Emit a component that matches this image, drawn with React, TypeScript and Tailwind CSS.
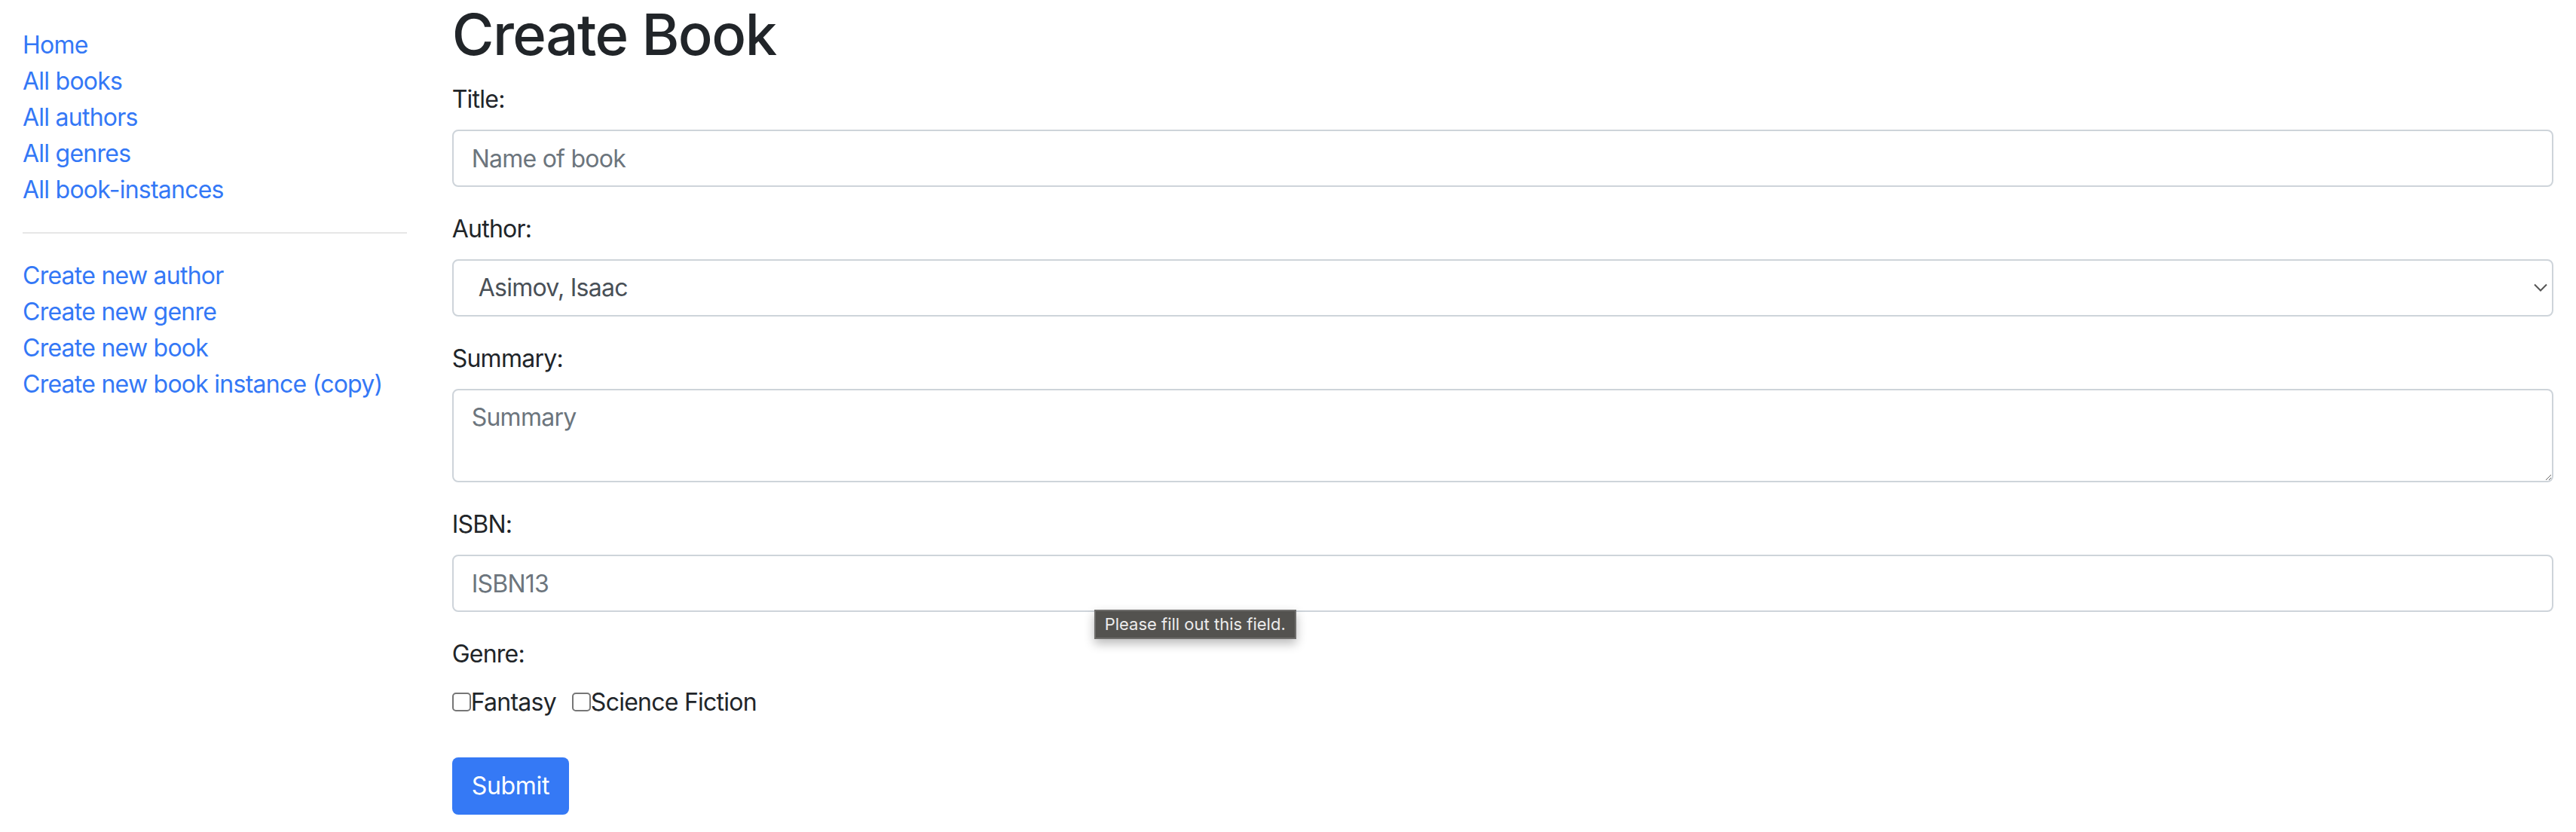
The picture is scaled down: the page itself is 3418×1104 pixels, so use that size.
import type { ReactNode } from 'react'

const FONT = "font-['Inter','Liberation_Sans',sans-serif]"

const NAV_TOP = ['Home', 'All books', 'All authors', 'All genres', 'All book-instances']
const NAV_CREATE = [
  'Create new author',
  'Create new genre',
  'Create new book',
  'Create new book instance (copy)',
]

function NavList({ items }: { items: string[] }) {
  return (
    <ul className="m-0 list-none p-0">
      {items.map((label) => (
        <li key={label} className="leading-[48px]">
          <a href="#" className="text-[#3478f6] no-underline">
            {label}
          </a>
        </li>
      ))}
    </ul>
  )
}

function Field({ label, children }: { label: string; children: ReactNode }) {
  return (
    <div className="relative mb-[32px]">
      <label className="mb-[16px] block leading-[48px] text-[#212529]">{label}</label>
      {children}
    </div>
  )
}

const controlCls =
  'block w-full rounded-[8px] border-2 border-[#ced4da] bg-white px-[24px] text-[32px] tracking-[-0.75px] text-[#495057] outline-none placeholder:text-[#6c757d]'

function Checkbox({ label }: { label: string }) {
  return (
    <span className="mr-[21px] inline-flex items-center">
      <span className="-mt-[2px] inline-block h-[25px] w-[25px] rounded-[5px] border-2 border-[#767676] bg-white" />
      <span className="text-[#212529]">{label}</span>
    </span>
  )
}

export default function App() {
  return (
    <div
      className={`${FONT} grid min-h-[1104px] grid-cols-[1fr_5fr] bg-white text-[32px] tracking-[-0.75px]`}
    >
      <aside className="px-[30px] pt-[36px]">
        <NavList items={NAV_TOP} />
        <hr className="my-[32px] border-0 border-t-2 border-[#e6e6e6]" />
        <NavList items={NAV_CREATE} />
      </aside>

      <main className="px-[30px]">
        <h1 className="mb-[18px] text-[76px] font-medium leading-[90px] tracking-[-1.5px] text-[#212529]">
          Create Book
        </h1>

        <form onSubmit={(e) => e.preventDefault()}>
          <Field label="Title:">
            <input className={`${controlCls} h-[76px]`} placeholder="Name of book" />
          </Field>

          <Field label="Author:">
            <div className="relative">
              <select
                className={`${controlCls} h-[76px] appearance-none pl-[33px]`}
                defaultValue="asimov"
              >
                <option value="asimov">Asimov, Isaac</option>
                <option value="bova">Bova, Ben</option>
              </select>
              <svg
                className="pointer-events-none absolute right-[7px] top-[31px]"
                width="20"
                height="13"
                viewBox="0 0 20 13"
                fill="none"
              >
                <path d="M2 2.5l8 8 8-8" stroke="#555" strokeWidth="2" />
              </svg>
            </div>
          </Field>

          <Field label="Summary:">
            <textarea
              className={`${controlCls} h-[124px] py-[12px] leading-[48px]`}
              placeholder="Summary"
            />
          </Field>

          <Field label="ISBN:">
            <input className={`${controlCls} h-[76px]`} placeholder="ISBN13" />
            <div className="absolute left-[852px] top-[137px] z-10 flex h-[39px] w-[268px] items-center border-2 border-[#6e6d6b] bg-[#53524f] pl-[12px] text-[22px] tracking-normal text-[#ececec] shadow-[0_6px_14px_rgba(0,0,0,0.28)]">
              Please fill out this field.
            </div>
          </Field>

          <div className="mb-[32px]">
            <label className="mb-[16px] block leading-[48px] text-[#212529]">Genre:</label>
            <div className="pb-[16px] leading-[48px]">
              <Checkbox label="Fantasy" />
              <Checkbox label="Science Fiction" />
            </div>
          </div>

          <button
            type="submit"
            className="h-[76px] rounded-[8px] bg-[#3579f5] px-[26px] text-[32px] leading-[48px] tracking-[-0.3px] text-white"
          >
            Submit
          </button>
        </form>
      </main>
    </div>
  )
}
